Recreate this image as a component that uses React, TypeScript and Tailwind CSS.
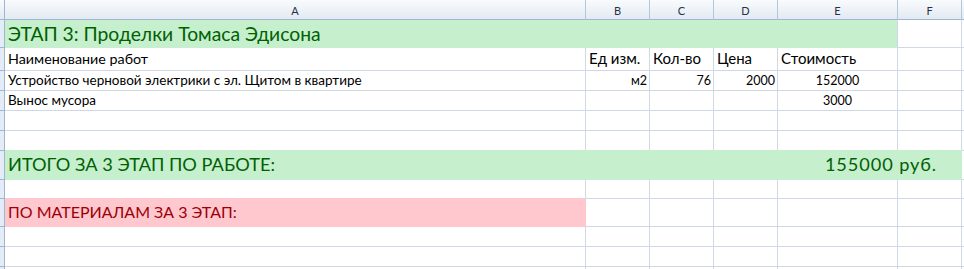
import React from "react";

// Лист сметы: этап 3 с итогами по работе и материалам

const font = "font-['Lato','Noto_Sans',sans-serif]";

function RowHead({ h }: { h: string }) {
  return <div className={`w-[5px] shrink-0 bg-[#e4ecf7] border-r border-b border-[#9eb6ce] ${h}`} />;
}

function Cell({
  w,
  children,
  className = "",
}: {
  w: string;
  children?: React.ReactNode;
  className?: string;
}) {
  return (
    <div
      className={`${w} shrink-0 border-r border-b border-[#d0d7e5] flex items-end overflow-visible whitespace-nowrap ${className}`}
    >
      {children}
    </div>
  );
}

function Tail() {
  return <div className="flex-1 border-b border-[#d0d7e5]" />;
}

function EmptyRow({ h }: { h: string }) {
  return (
    <div className={`flex ${h}`}>
      <RowHead h={h} />
      <Cell w="w-[581px]" />
      <Cell w="w-[64px]" />
      <Cell w="w-[64px]" />
      <Cell w="w-[64px]" />
      <Cell w="w-[120px]" />
      <Cell w="w-[64px]" />
      <Tail />
    </div>
  );
}

const headers = [
  { label: "A", w: "w-[581px]" },
  { label: "B", w: "w-[64px]" },
  { label: "C", w: "w-[64px]" },
  { label: "D", w: "w-[64px]" },
  { label: "E", w: "w-[120px]" },
  { label: "F", w: "w-[64px]" },
];

export default function App() {
  return (
    <div className={`w-[964px] h-[269px] overflow-hidden bg-white text-black ${font}`}>
      {/* заголовки столбцов */}
      <div className="flex h-[20px] bg-gradient-to-b from-[#f9fbfd] to-[#e2e9f3]">
        <div className="w-[5px] shrink-0 border-r border-b border-[#9eb6ce]" />
        {headers.map((c) => (
          <div
            key={c.label}
            className={`${c.w} shrink-0 border-r border-b border-[#b5c6da] border-b-[#9eb6ce] flex items-center justify-center text-[11px] text-[#27313e] leading-none pt-px`}
          >
            {c.label}
          </div>
        ))}
        <div className="flex-1 border-b border-[#9eb6ce]" />
      </div>

      {/* 1: заголовок этапа */}
      <div className="flex h-[28px]">
        <RowHead h="h-[28px]" />
        <div className="w-[893px] shrink-0 bg-[#c6efce] border-r border-b border-[#d0d7e5] border-b-[#c6efce] flex items-end pl-[3px] pb-[4px] text-[19.3px] leading-none text-[#006100] whitespace-nowrap">
          ЭТАП 3: Проделки Томаса Эдисона
        </div>
        <Cell w="w-[64px]" />
        <Tail />
      </div>

      {/* 2: шапка таблицы */}
      <div className="flex h-[23px] text-[15px] leading-none">
        <RowHead h="h-[23px]" />
        <Cell w="w-[581px]" className="pl-[3px] pb-[4px] text-[14.3px]">Наименование работ</Cell>
        <Cell w="w-[64px]" className="pl-[3px] pb-[4px]">Ед изм.</Cell>
        <Cell w="w-[64px]" className="pl-[3px] pb-[4px]">Кол-во</Cell>
        <Cell w="w-[64px]" className="pl-[3px] pb-[4px]">Цена</Cell>
        <Cell w="w-[120px]" className="pl-[3px] pb-[4px]">Стоимость</Cell>
        <Cell w="w-[64px]" />
        <Tail />
      </div>

      {/* 3-4: строки работ */}
      <div className="flex h-[20px] text-[13.5px] leading-none">
        <RowHead h="h-[20px]" />
        <Cell w="w-[581px]" className="pl-[3px] pb-[3px]">
          Устройство черновой электрики с эл. Щитом в квартире
        </Cell>
        <Cell w="w-[64px]" className="justify-end pr-[2px] pb-[3px] text-[12.5px]">м2</Cell>
        <Cell w="w-[64px]" className="justify-end pr-[2px] pb-[3px] text-[12.5px]">76</Cell>
        <Cell w="w-[64px]" className="justify-end pr-[2px] pb-[3px] text-[12.5px]">2000</Cell>
        <Cell w="w-[120px]" className="justify-center pb-[3px] text-[12.5px]">152000</Cell>
        <Cell w="w-[64px]" />
        <Tail />
      </div>
      <div className="flex h-[20px] text-[13.5px] leading-none">
        <RowHead h="h-[20px]" />
        <Cell w="w-[581px]" className="pl-[3px] pb-[3px]">Вынос мусора</Cell>
        <Cell w="w-[64px]" />
        <Cell w="w-[64px]" />
        <Cell w="w-[64px]" />
        <Cell w="w-[120px]" className="justify-center pb-[3px] text-[12.5px]">3000</Cell>
        <Cell w="w-[64px]" />
        <Tail />
      </div>

      <EmptyRow h="h-[20px]" />
      <EmptyRow h="h-[20px]" />

      {/* 7: итог по работе */}
      <div className="flex h-[29px]">
        <RowHead h="h-[29px]" />
        <div className="w-[957px] shrink-0 bg-[#c6efce] border-b border-[#c6efce] shadow-[0_-1px_0_#c6efce] flex items-end justify-between pl-[3px] pr-[25px] pb-[6px] text-[18.2px] leading-none text-[#006100] whitespace-nowrap">
          <span>ИТОГО ЗА 3 ЭТАП ПО РАБОТЕ:</span>
          <span className="tracking-[0.9px]">155000 руб.</span>
        </div>
        <Tail />
      </div>

      <EmptyRow h="h-[19px]" />

      {/* 9: итог по материалам */}
      <div className="flex h-[28px]">
        <RowHead h="h-[28px]" />
        <div className="w-[581px] shrink-0 bg-[#ffc7ce] border-r border-b border-[#ffc7ce] shadow-[0_-1px_0_#ffc7ce] flex items-end pl-[3px] pb-[6px] text-[16px] leading-none text-[#9c0006] whitespace-nowrap">
          ПО МАТЕРИАЛАМ ЗА 3 ЭТАП:
        </div>
        <Cell w="w-[64px]" />
        <Cell w="w-[64px]" />
        <Cell w="w-[64px]" />
        <Cell w="w-[120px]" />
        <Cell w="w-[64px]" />
        <Tail />
      </div>

      <EmptyRow h="h-[20px]" />
      <EmptyRow h="h-[20px]" />
      <EmptyRow h="h-[20px]" />
    </div>
  );
}
